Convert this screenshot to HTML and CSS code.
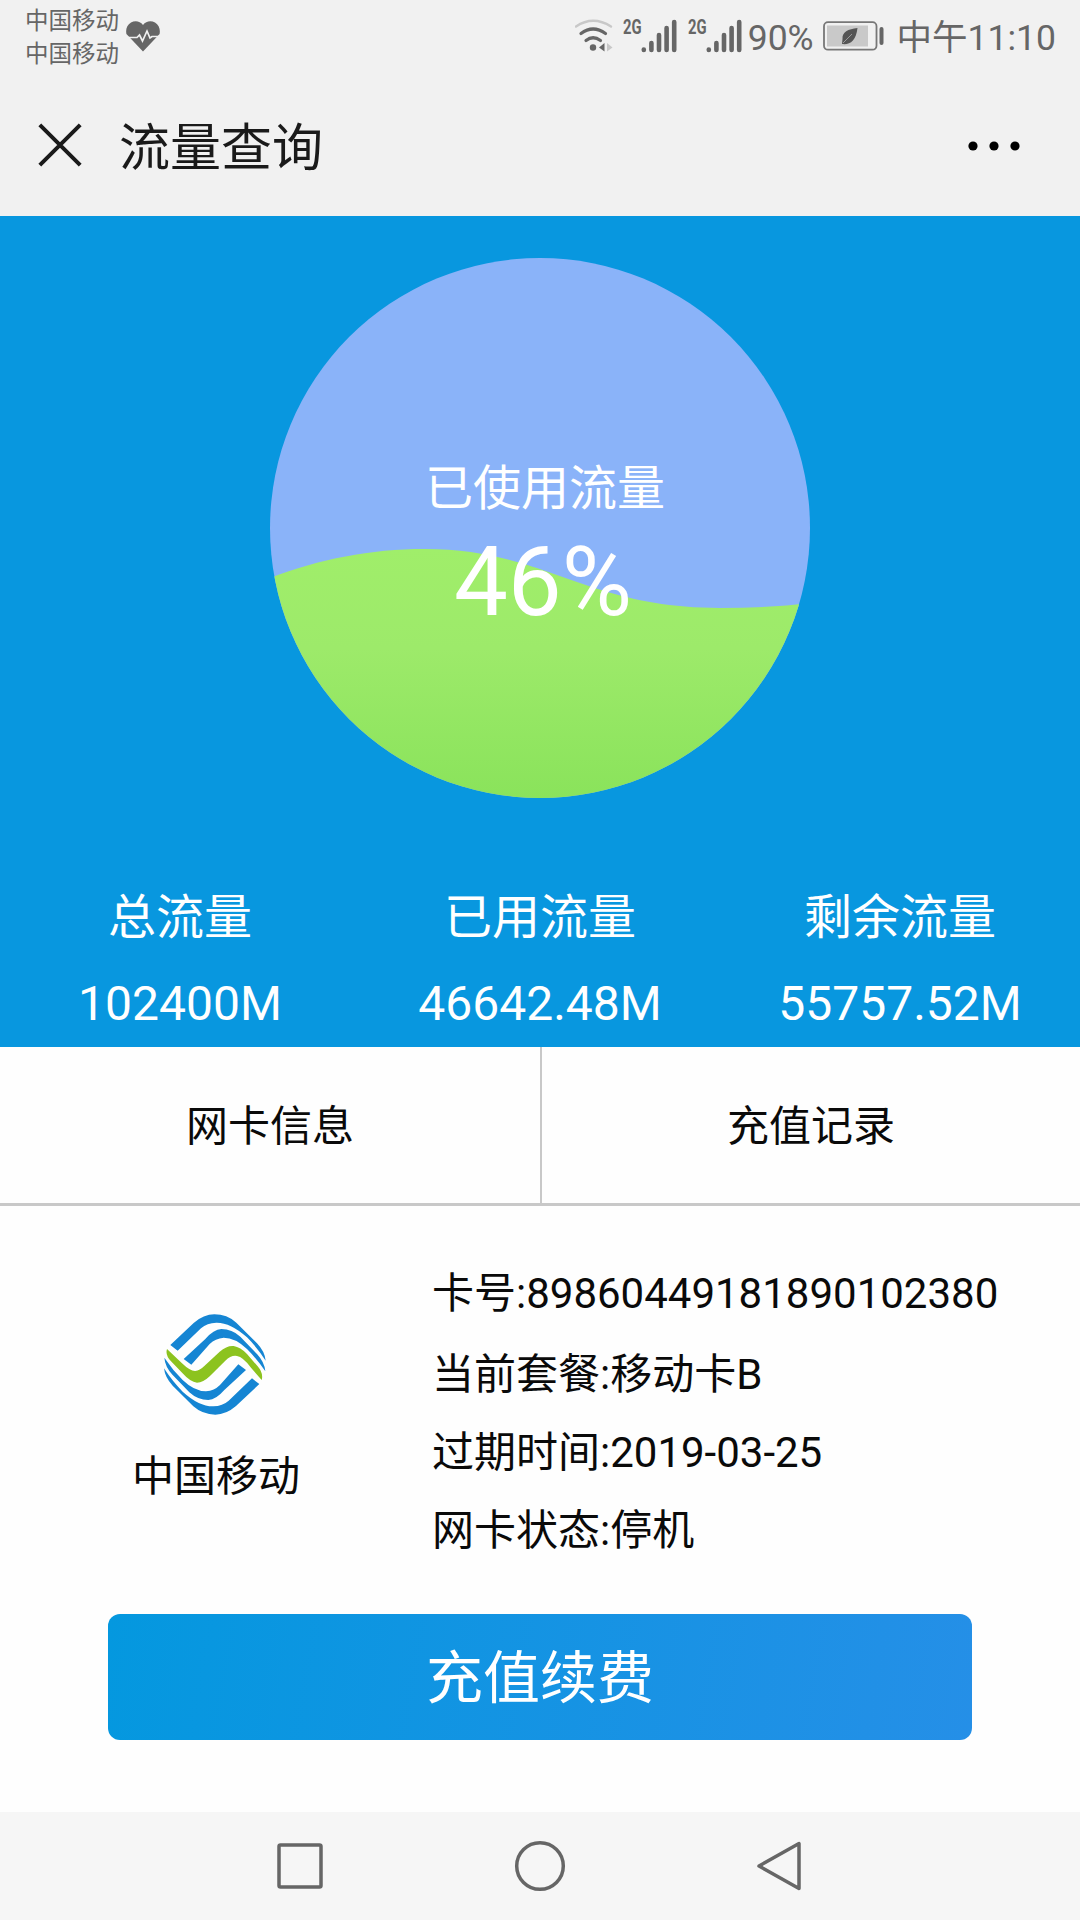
FILE: index.html
```
<!DOCTYPE html>
<html lang="zh-CN">
<head>
    <meta charset="UTF-8">
    <meta name="viewport" content="width=device-width, initial-scale=1.0">
    <title>流量查询</title>
    <link rel="stylesheet" href="styles.css">
</head>
<body>
    <div class="status-bar">
        <div class="carriers">
            <div>中国移动</div>
            <div>中国移动</div>
        </div>
        <svg class="heart" width="34" height="31" viewBox="0 0 34 31">
            <path fill="#666" d="M17 4C14 0 9-.5 5 1.500C1 4-.5 8 .4 13L17 30.500L33.600 13C34.500 8 33 4 29 1.500C25-.5 20 0 17 4Z"/>
            <path fill="none" stroke="#f1f1f1" stroke-width="1.700" d="M0 16.500H11L13.500 14L16.500 20L21 10L24 17L26 15.500H34"/>
        </svg>
        <div class="status-right">
            <svg class="wifi" width="38" height="33" viewBox="0 0 38 33">
                <g fill="none" stroke="#666" stroke-width="3.200" stroke-linecap="round">
                    <path stroke="#c8c8c8" stroke-width="2.400" d="M1 7.500Q18-4 36 7.500"/>
                    <path d="M6 14.500Q18 5.500 30.500 14.500"/>
                    <path d="M11 21.500Q18 16 25.500 21.500"/>
                </g>
                <circle cx="18" cy="28.500" r="3.200" fill="#666"/>
                <path fill="#666" d="M29.500 24V32.500L24 28.500Z"/>
                <path fill="#c8c8c8" d="M32 24V32.500L37.500 28.500Z"/>
            </svg>
            <div class="signal">
                <span class="network">2G</span>
                <svg width="36" height="34" viewBox="0 0 36 34" stroke="#666" stroke-width="4.600" stroke-linecap="round">
                    <path d="M2.800 30.500V31M10.400 24V31M18 16V31M25.600 9V31M33.200 3V31"/>
                </svg>
            </div>
            <div class="signal">
                <span class="network">2G</span>
                <svg width="36" height="34" viewBox="0 0 36 34" stroke="#666" stroke-width="4.600" stroke-linecap="round">
                    <path d="M2.800 30.500V31M10.400 24V31M18 16V31M25.600 9V31M33.200 3V31"/>
                </svg>
            </div>
            <span class="percent">90%</span>
            <svg class="battery" width="62" height="30" viewBox="0 0 62 30">
                <rect x="1" y="1.200" width="52.500" height="27.500" rx="4" fill="none" stroke="#777" stroke-width="1.800"/>
                <rect x="4" y="4.500" width="41" height="21" fill="#c9c9c9"/>
                <rect x="56.500" y="6" width="4" height="18" rx="2" fill="#666"/>
                <path fill="#555" d="M34.500 7C25 8 19 11 19.500 18L19 23C27 24 33 20 34.500 7Z"/>
                <path fill="none" stroke="#c9c9c9" stroke-width=".6" d="M20 22L29 13"/>
            </svg>
            <span class="clock">中午11:10</span>
        </div>
    </div>

    <div class="title-bar">
        <svg class="close" width="44" height="44" viewBox="0 0 44 44">
            <path stroke="#1a1a1a" stroke-width="4" d="M1.800 1.800L42.200 42.200M42.200 1.800L1.800 42.200"/>
        </svg>
        <h1>流量查询</h1>
        <svg class="more" width="54" height="12" viewBox="0 0 54 12">
            <circle cx="6" cy="6" r="4.600"/>
            <circle cx="27" cy="6" r="4.600"/>
            <circle cx="48" cy="6" r="4.600"/>
        </svg>
    </div>

    <div class="usage">
        <div class="ball">
            <svg class="wave" viewBox="0 0 540 540">
                <defs>
                    <linearGradient id="water" x1="0" y1="0" x2="0" y2="1">
                        <stop offset="0" stop-color="#a0ee6a"/>
                        <stop offset="0.4" stop-color="#9dea6a"/>
                        <stop offset="1" stop-color="#8ae35b"/>
                    </linearGradient>
                </defs>
                <path fill="url(#water)" d="M0 320C50 301 100 291 155 291C275 291 315 350 450 350Q500 350 540 345V540H0Z"/>
            </svg>
            <div class="ball-text">
                <div class="ball-label">已使用流量</div>
                <div class="ball-value">46%</div>
            </div>
        </div>
        <div class="stats">
            <div class="stat">
                <div class="stat-label">总流量</div>
                <div class="stat-value">102400M</div>
            </div>
            <div class="stat">
                <div class="stat-label">已用流量</div>
                <div class="stat-value">46642.48M</div>
            </div>
            <div class="stat">
                <div class="stat-label">剩余流量</div>
                <div class="stat-value">55757.52M</div>
            </div>
        </div>
    </div>

    <div class="tabs">
        <div class="tab">网卡信息</div>
        <div class="tab">充值记录</div>
    </div>

    <div class="card-info">
        <div class="operator">
            <svg width="102" height="101" viewBox="71 70 306 303">
                <g fill="#1585d3">
                    <path d="M90 163L160 97Q190 71 222 71Q260 71 288 96L350 158Q373 182 376 210Q350 170 320 140Q270 95 228 96Q200 97 182 113L112 180Z"/>
                    <path d="M130 205L195 145Q220 116 243 115Q275 115 300 138L350 190Q373 215 375 242Q350 205 320 175Q285 141 250 141Q225 143 208 160L153 222Z"/>
                </g>
                <g fill="#1585d3" transform="rotate(180 223.500 221.500)">
                    <path d="M90 163L160 97Q190 71 222 71Q260 71 288 96L350 158Q373 182 376 210Q350 170 320 140Q270 95 228 96Q200 97 182 113L112 180Z"/>
                    <path d="M130 205L195 145Q220 116 243 115Q275 115 300 138L350 190Q373 215 375 242Q350 205 320 175Q285 141 250 141Q225 143 208 160L153 222Z"/>
                </g>
                <path fill="#8cc31f" d="M80 175L125 218Q150 242 165 241Q178 240 192 226L238 183Q260 164 280 166Q300 169 320 190L352 227Q370 248 364 268L332 231Q308 199 290 196Q272 193 255 210L209 256Q188 276 170 276Q150 274 126 247L92 212Q74 192 80 175Z"/>
            </svg>
            <div class="operator-name">中国移动</div>
        </div>
        <div class="details">
            <div class="detail number">卡号:89860449181890102380</div>
            <div class="detail">当前套餐:移动卡B</div>
            <div class="detail">过期时间:2019-03-25</div>
            <div class="detail">网卡状态:停机</div>
        </div>
    </div>

    <button class="recharge">充值续费</button>

    <div class="nav-bar">
        <svg width="54" height="54" viewBox="0 0 54 54">
            <rect x="6" y="6" width="42" height="42" rx="1.500"/>
        </svg>
        <svg width="54" height="54" viewBox="0 0 54 54">
            <circle cx="27" cy="27" r="23.300"/>
        </svg>
        <svg width="54" height="54" viewBox="0 0 54 54">
            <path stroke-linejoin="round" d="M46 4.500V49.500L6 27Z"/>
        </svg>
    </div>
</body>
</html>
```

FILE: styles.css
```
* {
    box-sizing: border-box;
}
body {
    margin: 0;
    height: 1920px;
    display: flex;
    flex-direction: column;
    font-family: Roboto, "Noto Sans CJK SC", sans-serif;
    font-size: 42px;
    color: #0a0a0a;
    background-color: #fefefe;
}
svg {
    display: block;
    flex: none;
}
.status-bar {
    height: 76px;
    padding: 0 24px 0 25px;
    display: flex;
    background-color: #f1f1f1;
    color: #666;
}
.carriers {
    width: 101px;
    padding-top: 5px;
    font-size: 23.5px;
    line-height: 33px;
}
.heart {
    margin-top: 21px;
}
.status-right {
    margin-left: auto;
    display: flex;
    font-size: 35.5px;
    line-height: 76px;
}
.wifi {
    margin-top: 19px;
}
.signal {
    width: 65px;
    margin-top: 19px;
    display: flex;
}
.wifi + .signal {
    margin-left: 10px;
}
.signal + .signal {
    width: 60px;
}
.network {
    width: 18px;
    font-size: 20px;
    font-weight: bold;
    line-height: 17px;
    transform: scaleX(0.74);
    transform-origin: left;
}
.battery {
    margin: 21px 12px 0 9px;
}
.title-bar {
    height: 140px;
    padding: 0 59px 0 38px;
    display: flex;
    align-items: center;
    background-color: #f1f1f1;
}
.close {
    margin: -3px 37px 0 0;
}
h1 {
    margin: 0;
    padding-top: 6px;
    font-size: 51px;
    font-weight: normal;
    line-height: 60px;
    color: #1a1a1a;
}
.more {
    margin-left: auto;
}
.usage {
    height: 831px;
    padding-top: 42px;
    color: #fff;
    background-color: #0897df;
}
.ball {
    width: 540px;
    height: 540px;
    margin: 0 auto;
    display: grid;
    overflow: hidden;
    border-radius: 50%;
    background-color: #8ab3f9;
}
.wave,
.ball-text {
    grid-area: 1 / 1;
}
.ball-text {
    padding: 201px 0 0 10px;
    text-align: center;
}
.ball-label {
    font-size: 48px;
    line-height: 60px;
}
.ball-value {
    padding-right: 4px;
    font-size: 96px;
    line-height: 126px;
}
.stats {
    margin-top: 88px;
    display: grid;
    grid-template-columns: repeat(3, 1fr);
    text-align: center;
    font-size: 48px;
    line-height: 64px;
}
.stat-value {
    margin-top: 22px;
}
.tabs {
    height: 159px;
    display: flex;
    border-bottom: 3px solid #c8c8c8;
}
.tab {
    width: 538px;
    text-align: center;
    line-height: 159px;
}
.tab:first-child {
    width: 542px;
    border-right: 2px solid #c8c8c8;
}
.card-info {
    height: 408px;
    display: flex;
}
.operator {
    width: 432px;
    padding-top: 108px;
    padding-right: 2px;
    display: flex;
    flex-direction: column;
    align-items: center;
}
.operator-name {
    margin-top: 30px;
    padding-left: 2px;
    line-height: 64px;
}
.details {
    padding-top: 48px;
    line-height: 79px;
}
.number {
    margin-bottom: 2px;
}
.detail:nth-child(n + 3) {
    margin-top: -1px;
}
.recharge {
    width: 864px;
    height: 126px;
    margin: 0 auto;
    padding: 0 0 9px;
    border: none;
    border-radius: 12px;
    font-family: inherit;
    font-size: 57px;
    color: #fff;
    background: linear-gradient(100deg, #0498df, #258fe7);
}
.nav-bar {
    height: 108px;
    margin-top: auto;
    padding: 0 273px;
    display: flex;
    align-items: center;
    justify-content: space-between;
    background-color: #f6f6f6;
}
.nav-bar svg {
    fill: none;
    stroke: #666;
    stroke-width: 3.5;
}
```
